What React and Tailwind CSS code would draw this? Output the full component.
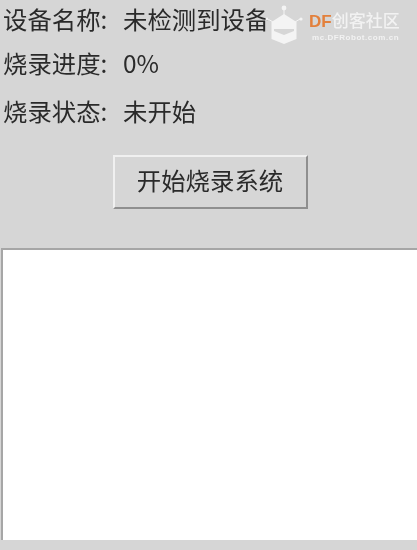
const cjk = "font-['Noto_Sans_CJK_SC','Liberation_Sans',sans-serif]";

function Row({ label, value, className }) {
  return (
    <div className={`flex items-center h-[30px] text-[24.4px] leading-[30px] text-[#2a2a2a] ${className}`}>
      <span className="w-[123px] shrink-0 pl-[3px] whitespace-nowrap">{label}</span>
      <span className="whitespace-nowrap">{value}</span>
    </div>
  );
}

function Logo() {
  return (
    <div className="absolute top-[5px] left-[268px] flex items-start blur-[0.4px]">
      <svg width="40" height="40" viewBox="0 0 40 40" className="shrink-0 overflow-visible">
        <circle cx="-1" cy="14" r="1.6" fill="#f4f4f4" />
        <circle cx="33" cy="14" r="1.6" fill="#f4f4f4" />
        <circle cx="16" cy="3" r="2.4" fill="#f4f4f4" />
        <path d="M16 4v6M0 14l5 3M32 14l-5 3" stroke="#f4f4f4" strokeWidth="1" />
        <path d="M16 9 L28.5 17 V34 L16 39 L3.5 34 V17 Z" fill="#f4f4f4" />
        <path d="M6 24 H26 V26 L16 30 L6 26 Z" fill="#d6d6d6" />
      </svg>
      <div className="ml-[1px] flex flex-col">
        <div className="flex items-baseline h-[25px] leading-[25px] mt-[2px]">
          <span className="text-[17px] font-bold text-[#e3803c] font-['Liberation_Sans',sans-serif]">DF</span>
          <span className="text-[17px] font-medium text-[#f2f2f2]">创客社区</span>
        </div>
        <span className="text-[8px] leading-[10px] ml-[3px] mt-[1px] font-bold tracking-[0.55px] text-[#f2f2f2] font-['Liberation_Sans',sans-serif] whitespace-nowrap">
          mc.DFRobot.com.cn
        </span>
      </div>
    </div>
  );
}

export default function App() {
  return (
    <div className={`relative w-[417px] h-[550px] overflow-hidden bg-[#d6d6d6] ${cjk}`}>
      <div className="pt-[4px] blur-[0.5px]">
        <Row label="设备名称:" value="未检测到设备" />
        <Row label="烧录进度:" value="0%" className="mt-[14px]" />
        <Row label="烧录状态:" value="未开始" className="mt-[18px]" />
      </div>

      <div className="flex justify-center pl-[3px] mt-[29px]">
        <button className="w-[195px] h-[54px] text-[24.4px] text-[#2a2a2a] bg-[#d6d6d6] border-2 border-t-[#f0f0f0] border-l-[#f0f0f0] border-r-[#8f8f8f] border-b-[#8f8f8f]">
          <span className="blur-[0.5px] block pb-[3px]">开始烧录系统</span>
        </button>
      </div>

      <div className="mt-[39px] ml-[1px] h-[292px] bg-white border-t-2 border-l-2 border-[#a6a6a6]" />

      <Logo />
    </div>
  );
}
